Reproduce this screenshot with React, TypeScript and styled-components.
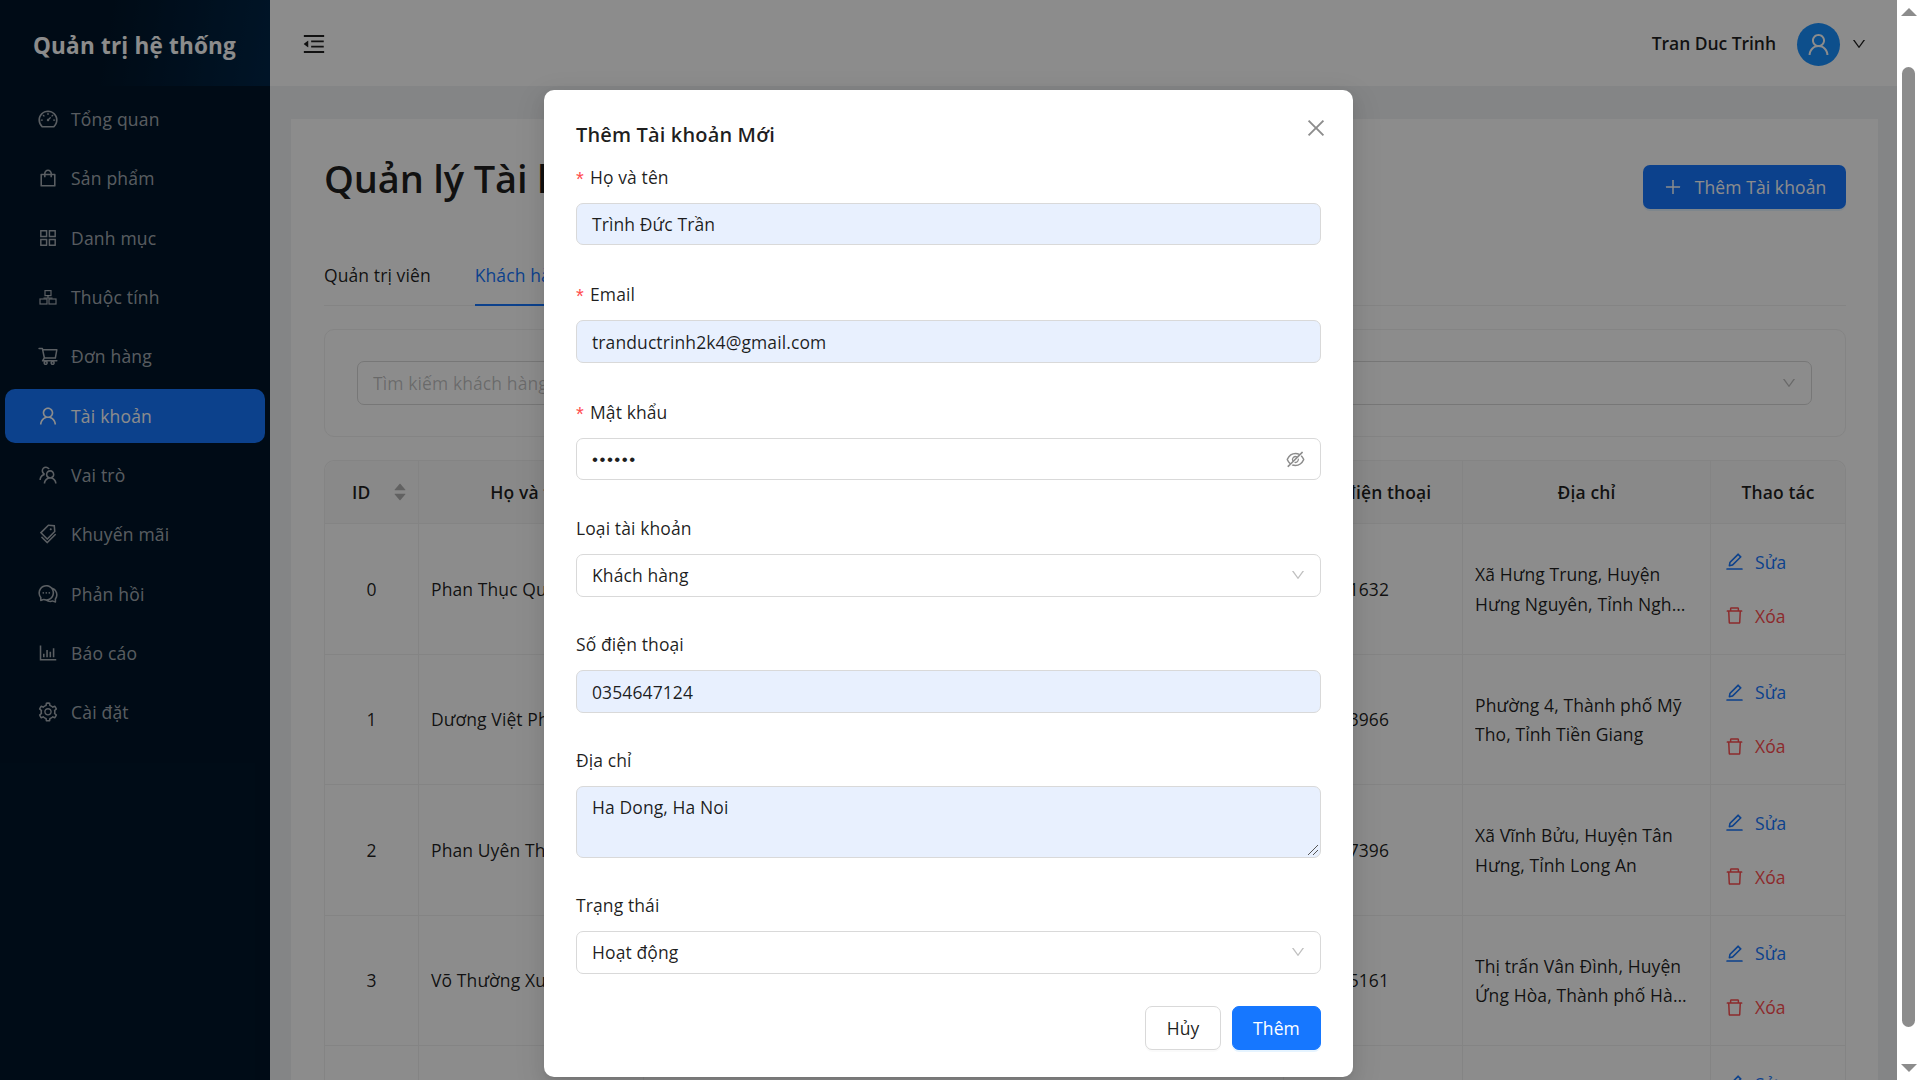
import React from 'react';
import styled, { createGlobalStyle } from 'styled-components';
import {
  AiOutlineDashboard, AiOutlineShopping, AiOutlineAppstore, AiOutlineShoppingCart,
  AiOutlineUser, AiOutlineTeam, AiOutlineTags, AiOutlineComment, AiOutlineBarChart, AiOutlineSetting,
  AiOutlineMenuFold, AiOutlineDown, AiOutlinePlus, AiOutlineEdit, AiOutlineDelete, AiOutlineClose,
  AiOutlineEyeInvisible, AiFillCaretUp, AiFillCaretDown,
} from 'react-icons/ai';

const FONT = `"Open Sans", "Noto Sans", "Liberation Sans", sans-serif`;

const Global = createGlobalStyle`
  html, body { margin: 0; padding: 0; height: 100%; overflow: hidden; background: #fff; }
  body { font-family: ${FONT}; font-size: 17.5px; color: rgba(0,0,0,.88); letter-spacing: 0.1px; }
  * { box-sizing: border-box; }
`;

const Shell = styled.div`display: flex; width: 1920px; height: 1080px; overflow: hidden;`;
const Page = styled.div`position: relative; display: flex; width: 1897px; height: 1080px; overflow: hidden;`;

const Side = styled.aside`width: 270px; flex: none; background: #001529;`;
const Logo = styled.div`
  height: 86px; display: flex; align-items: center; padding: 4px 0 0 33px;
  background: linear-gradient(100deg, #001529 40%, #002648 100%);
  color: #fff; font-size: 22.5px; font-weight: 700; letter-spacing: 0.2px;
`;
const Menu = styled.nav`display: flex; flex-direction: column; gap: 5.35px; padding: 6px 5px 0;`;
const MenuItem = styled.div<{ $active?: boolean }>`
  height: 54px; display: flex; align-items: center; gap: 12.5px; padding-left: 31.5px; border-radius: 10px;
  background: ${p => (p.$active ? '#1677ff' : 'transparent')};
  color: ${p => (p.$active ? '#fff' : 'rgba(255,255,255,.65)')};
  font-size: 17.5px; letter-spacing: 0.2px;
  svg { font-size: 22px; flex: none; }
`;

const Main = styled.div`flex: 1; min-width: 0; background: #f0f2f5; display: flex; flex-direction: column;`;
const Header = styled.header`
  height: 86px; flex: none; background: #fff; display: flex; align-items: center; justify-content: space-between;
  padding: 0 30px 0 31px;
`;
const Toggle = styled.div`display: flex; font-size: 26px; margin-top: 1px; color: rgba(0,0,0,.88);`;
const UserBox = styled.div`display: flex; align-items: center;`;
const UserName = styled.span`font-weight: 600; font-size: 17.5px; margin-right: 21px; letter-spacing: -0.05px;`;
const Avatar = styled.div`
  width: 43px; height: 43px; border-radius: 50%; background: #1890ff; color: #fff; margin-top: 3px;
  display: flex; align-items: center; justify-content: center; font-size: 27px; margin-right: 11px;
`;
const Caret = styled.div`display: flex; font-size: 16px; margin-top: 1px;`;

const Content = styled.main`flex: 1; min-height: 0; padding: 33px 19px 0 21px;`;
const Card = styled.section`background: #fff; padding: 32px 32px 0 33px; height: 1000px;`;
const TitleRow = styled.div`display: flex; align-items: flex-start; justify-content: space-between; height: 58px;`;
const Title = styled.h1`margin: 0; font-size: 38px; font-weight: 600; line-height: 54px; letter-spacing: -0.15px;`;
const AddBtn = styled.button`
  height: 44px; width: 203px; margin-top: 14px; border: 0; border-radius: 7px; background: #1677ff; color: #fff;
  display: flex; align-items: center; justify-content: center; gap: 12px;
  font: inherit; letter-spacing: inherit; box-shadow: 0 2px 0 rgba(5,145,255,.1);
  svg { font-size: 20px; }
`;
const Tabs = styled.div`display: flex; gap: 44px; height: 62px; margin-top: 35px; border-bottom: 1px solid #f0f0f0;`;
const Tab = styled.div<{ $active?: boolean }>`
  height: 62px; display: flex; align-items: center; padding-top: 2px;
  color: ${p => (p.$active ? '#1677ff' : 'inherit')};
  border-bottom: 2px solid ${p => (p.$active ? '#1677ff' : 'transparent')};
`;
const Filter = styled.div`
  margin-top: 23px; height: 108px; border: 1px solid #f0f0f0; border-radius: 10px;
  padding: 31px 33px 31px 32px; display: flex; gap: 20px;
`;
const SearchBox = styled.div`
  flex: 1; height: 44px; border: 1px solid #d9d9d9; border-radius: 7px; padding: 0 15px;
  display: flex; align-items: center; color: rgba(0,0,0,.25);
`;
const FilterSelect = styled.div`
  width: 900px; height: 44px; border: 1px solid #d9d9d9; border-radius: 7px; padding: 0 14px;
  display: flex; align-items: center; justify-content: flex-end; color: rgba(0,0,0,.25); font-size: 16px;
`;

const Table = styled.div`
  margin-top: 23px; border: 1px solid #f0f0f0; border-bottom: 0; border-radius: 10px 10px 0 0;
`;
const GRID = '94px 225px 640px 179px 248px 1fr';
const HeadRow = styled.div`
  display: grid; grid-template-columns: ${GRID}; height: 63px; background: #fafafa; border-radius: 10px 10px 0 0;
  border-bottom: 1px solid #f0f0f0; font-weight: 600;
`;
const HeadCell = styled.div<{ $sort?: boolean; $nudge?: number }>`
  display: flex; align-items: center; justify-content: ${p => (p.$sort ? 'flex-start' : 'center')};
  padding-left: ${p => (p.$sort ? 27 : p.$nudge ?? 0)}px; gap: 22px;
  border-right: 1px solid #f0f0f0; &:last-child { border-right: 0; }
`;
const Sorter = styled.span`display: flex; flex-direction: column; font-size: 16px; color: rgba(0,0,0,.29); svg { margin: -3px 0; }`;
const BodyRow = styled.div`
  display: grid; grid-template-columns: ${GRID}; height: 130.5px; border-bottom: 1px solid #f0f0f0;
`;
const Cell = styled.div<{ $center?: boolean; $tight?: boolean }>`
  display: flex; align-items: center; padding: 0 12px 0 ${p => (p.$tight ? 4 : 12)}px;
  justify-content: ${p => (p.$center ? 'center' : 'flex-start')};
  border-right: 1px solid #f0f0f0; &:last-child { border-right: 0; }
`;
const Address = styled.div`
  max-width: 218px; padding-top: 2px; line-height: 29.5px; overflow: hidden;
  display: -webkit-box; -webkit-line-clamp: 2; -webkit-box-orient: vertical;
`;
const Actions = styled.div`display: flex; flex-direction: column; gap: 24px; padding-left: 1px; width: 100%;`;
const Action = styled.div<{ $danger?: boolean }>`
  display: flex; align-items: center; gap: 10px; height: 30px; color: ${p => (p.$danger ? '#ff4d4f' : '#1677ff')};
  svg { font-size: 21px; }
`;

const Overlay = styled.div`position: absolute; inset: 0; background: rgba(0,0,0,.45);`;
const Modal = styled.div`
  position: absolute; left: 544px; top: 90px; width: 809px; height: 987px; background: #fff; border-radius: 10px;
  padding: 0 32px; box-shadow: 0 6px 16px rgba(0,0,0,.08), 0 3px 6px -4px rgba(0,0,0,.12), 0 9px 28px 8px rgba(0,0,0,.05);
`;
const ModalTitle = styled.h2`margin: 0; padding-top: 28px; height: 73px; font-size: 20px; font-weight: 600; line-height: 34px; letter-spacing: 0.15px;`;
const Close = styled.div`position: absolute; top: 26px; right: 25px; display: flex; font-size: 24px; color: rgba(0,0,0,.45);`;
const Field = styled.div<{ $h: number }>`height: ${p => p.$h}px;`;
const Label = styled.div`height: 40px; display: flex; align-items: flex-start; line-height: 29px;`;
const Star = styled.span`width: 14px; flex: none; color: #ff4d4f; font-family: "Liberation Sans", sans-serif; font-size: 20px; line-height: 33px; height: 29px; letter-spacing: 0;`;
const Input = styled.div<{ $filled?: boolean; $h?: number; $top?: boolean }>`
  height: ${p => p.$h ?? 42}px; border: 1px solid #d9d9d9; border-radius: 7px; padding: ${p => (p.$top ? '8px 15px' : '0 15px')};
  display: flex; align-items: ${p => (p.$top ? 'flex-start' : 'center')}; justify-content: space-between; position: relative;
  background: ${p => (p.$filled ? '#e8f0fe' : '#fff')};
`;
const SelectBox = styled(Input)`padding-bottom: 2px;`;
const Dots = styled.span`font-size: 17px; letter-spacing: 1.5px; padding-top: 2px; font-family: "Liberation Sans", sans-serif;`;
const Muted = styled.span`display: flex; font-size: 21px; margin-right: -1px; color: rgba(0,0,0,.45);`;
const Arrow = styled.span`display: flex; font-size: 16px; margin-right: -1px; color: rgba(0,0,0,.25);`;
const Grip = styled.svg`position: absolute; right: 1px; bottom: 1px;`;
const Footer = styled.div`display: flex; justify-content: flex-end; gap: 11px;`;
const ModalBtn = styled.button<{ $primary?: boolean }>`
  height: 44px; border-radius: 7px; font: inherit; letter-spacing: inherit;
  width: ${p => (p.$primary ? 89 : 76)}px;
  border: 1px solid ${p => (p.$primary ? '#1677ff' : '#d9d9d9')};
  background: ${p => (p.$primary ? '#1677ff' : '#fff')};
  color: ${p => (p.$primary ? '#fff' : 'rgba(0,0,0,.88)')};
  box-shadow: 0 2px 0 ${p => (p.$primary ? 'rgba(5,145,255,.1)' : 'rgba(0,0,0,.02)')};
`;

const Scrollbar = styled.div`width: 23px; flex: none; background: #fff; display: flex; flex-direction: column; align-items: center; padding: 8px 0;`;
const Thumb = styled.div`width: 13px; height: 960px; border-radius: 7px; background: #8c8c8c; margin-top: 51px;`;
const BottomArrow = styled.svg`margin-top: auto; flex: none;`;
const TopArrow = styled.svg`flex: none;`;

const BlocksIcon = () => (
  <svg width="1em" height="1em" viewBox="0 0 22 22" fill="none" stroke="currentColor" strokeWidth="1.2">
    <rect x="8" y="4.6" width="6" height="5" />
    <path d="M11 9.6V12M6.5 12H15.5" />
    <rect x="3" y="13" width="7" height="5" />
    <rect x="12" y="13" width="7" height="5" />
  </svg>
);

const items = [
  ['Tổng quan', AiOutlineDashboard], ['Sản phẩm', AiOutlineShopping], ['Danh mục', AiOutlineAppstore],
  ['Thuộc tính', BlocksIcon], ['Đơn hàng', AiOutlineShoppingCart], ['Tài khoản', AiOutlineUser],
  ['Vai trò', AiOutlineTeam], ['Khuyến mãi', AiOutlineTags], ['Phản hồi', AiOutlineComment],
  ['Báo cáo', AiOutlineBarChart], ['Cài đặt', AiOutlineSetting],
] as const;

const rows = [
  ['0', 'Phan Thục Quyên', 'thucquyen@gmail.com', '0912341632', 'Xã Hưng Trung, Huyện Hưng Nguyên, Tỉnh Nghệ An, Việt Nam'],
  ['1', 'Dương Việt Phong', 'vietphong@gmail.com', '0912343966', 'Phường 4, Thành phố Mỹ Tho, Tỉnh Tiền Giang'],
  ['2', 'Phan Uyên Thư', 'uyenthu@gmail.com', '0912347396', 'Xã Vĩnh Bửu, Huyện Tân Hưng, Tỉnh Long An'],
  ['3', 'Võ Thường Xuân', 'thuongxuan@gmail.com', '0912345161', 'Thị trấn Vân Đình, Huyện Ứng Hòa, Thành phố Hà Nội, Việt Nam'],
  ['4', 'Lê Minh Anh', 'minhanh@gmail.com', '0912340000', 'Quận 1, Thành phố Hồ Chí Minh'],
];

export default function App() {
  return (
    <Shell>
      <Global />
      <Page>
        <Side>
          <Logo>Quản trị hệ thống</Logo>
          <Menu>
            {items.map(([label, Icon]) => (
              <MenuItem key={label} $active={label === 'Tài khoản'}><Icon />{label}</MenuItem>
            ))}
          </Menu>
        </Side>
        <Main>
          <Header>
            <Toggle><AiOutlineMenuFold /></Toggle>
            <UserBox>
              <UserName>Tran Duc Trinh</UserName>
              <Avatar><AiOutlineUser /></Avatar>
              <Caret><AiOutlineDown /></Caret>
            </UserBox>
          </Header>
          <Content>
            <Card>
              <TitleRow>
                <Title>Quản lý Tài khoản</Title>
                <AddBtn><AiOutlinePlus />Thêm Tài khoản</AddBtn>
              </TitleRow>
              <Tabs>
                <Tab>Quản trị viên</Tab>
                <Tab $active>Khách hàng</Tab>
              </Tabs>
              <Filter>
                <SearchBox>Tìm kiếm khách hàng</SearchBox>
                <FilterSelect><AiOutlineDown /></FilterSelect>
              </Filter>
              <Table>
                <HeadRow>
                  <HeadCell $sort>ID<Sorter><AiFillCaretUp /><AiFillCaretDown /></Sorter></HeadCell>
                  <HeadCell>Họ và tên</HeadCell>
                  <HeadCell>Email</HeadCell>
                  <HeadCell $nudge={5}>Số điện thoại</HeadCell>
                  <HeadCell>Địa chỉ</HeadCell>
                  <HeadCell>Thao tác</HeadCell>
                </HeadRow>
                {rows.map(r => (
                  <BodyRow key={r[0]}>
                    <Cell $center>{r[0]}</Cell>
                    <Cell>{r[1]}</Cell>
                    <Cell>{r[2]}</Cell>
                    <Cell $tight>{r[3]}</Cell>
                    <Cell><Address>{r[4]}</Address></Cell>
                    <Cell>
                      <Actions>
                        <Action><AiOutlineEdit />Sửa</Action>
                        <Action $danger><AiOutlineDelete />Xóa</Action>
                      </Actions>
                    </Cell>
                  </BodyRow>
                ))}
              </Table>
            </Card>
          </Content>
        </Main>
        <Overlay />
        <Modal>
          <ModalTitle>Thêm Tài khoản Mới</ModalTitle>
          <Close><AiOutlineClose /></Close>
          <Field $h={117}><Label><Star>*</Star>Họ và tên</Label><Input $filled>Trình Đức Trần</Input></Field>
          <Field $h={118}><Label><Star>*</Star>Email</Label><Input $filled $h={43}>tranductrinh2k4@gmail.com</Input></Field>
          <Field $h={116}><Label><Star>*</Star>Mật khẩu</Label><Input><Dots>••••••</Dots><Muted><AiOutlineEyeInvisible /></Muted></Input></Field>
          <Field $h={116}><Label>Loại tài khoản</Label><SelectBox $h={43}>Khách hàng<Arrow><AiOutlineDown /></Arrow></SelectBox></Field>
          <Field $h={116}><Label>Số điện thoại</Label><Input $filled $h={43}>0354647124</Input></Field>
          <Field $h={145}><Label>Địa chỉ</Label><Input $filled $top $h={72}>Ha Dong, Ha Noi
            <Grip width="14" height="14" viewBox="0 0 14 14"><path d="M3 13 L13 3 M8 13 L13 8" stroke="#555" strokeWidth="1" fill="none" /></Grip>
          </Input></Field>
          <Field $h={115}><Label>Trạng thái</Label><SelectBox $h={43}>Hoạt động<Arrow><AiOutlineDown /></Arrow></SelectBox></Field>
          <Footer><ModalBtn>Hủy</ModalBtn><ModalBtn $primary>Thêm</ModalBtn></Footer>
        </Modal>
      </Page>
      <Scrollbar>
        <TopArrow width="16" height="8" viewBox="0 0 16 8"><path d="M8 0 L16 8 H0 Z" fill="#8c8c8c" /></TopArrow>
        <Thumb />
        <BottomArrow width="16" height="8" viewBox="0 0 16 8"><path d="M8 8 L16 0 H0 Z" fill="#8c8c8c" /></BottomArrow>
      </Scrollbar>
    </Shell>
  );
}
